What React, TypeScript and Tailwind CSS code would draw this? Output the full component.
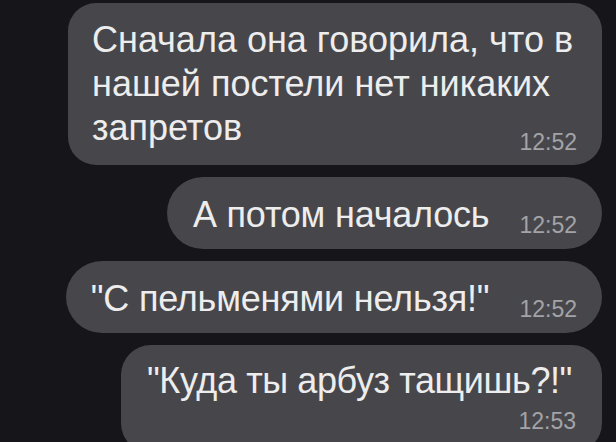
import React from "react";

type Msg = {
  lines: string[];
  track?: string[];
  time: string;
  kind: "block" | "pill" | "stack";
  box: string;
};

const messages: Msg[] = [
  {
    lines: ["Сначала она говорила, что в", "нашей постели нет никаких", "запретов"],
    time: "12:52",
    kind: "block",
    box: "w-[534px] rounded-[28px] pl-[24px] pr-[26px] pt-[15px] pb-[11px]",
  },
  {
    lines: ["А потом началось"],
    track: ["tracking-[-0.2px]"],
    time: "12:52",
    kind: "pill",
    box: "rounded-full pl-[26px] pr-[25px] pt-[16px] pb-[12px]",
  },
  {
    lines: ["\"С пельменями нельзя!\""],
    track: ["tracking-[-0.2px]"],
    time: "12:52",
    kind: "pill",
    box: "rounded-full pl-[25px] pr-[25px] pt-[16px] pb-[12px]",
  },
  {
    lines: ["\"Куда ты арбуз тащишь?!\""],
    track: ["tracking-[-0.4px]"],
    time: "12:53",
    kind: "stack",
    box: "rounded-[30px] pl-[26px] pr-[30px] pt-[14px] pb-[20px]",
  },
];

const Bubble = ({ lines, track, time, kind, box }: Msg) => {
  const text = (
    <div className="text-[36px] leading-[44px] text-[#ededee] whitespace-nowrap">
      {lines.map((l, i) => (
        <div key={i} className={track?.[i] ?? ""}>
          {l}
        </div>
      ))}
    </div>
  );
  const stamp = "text-[23px] leading-[23px] text-[#a3a3a8]";

  if (kind === "pill") {
    return (
      <div className={`bg-[#47474b] flex items-end ${box}`}>
        {text}
        <span className={`${stamp} ml-[30px]`}>{time}</span>
      </div>
    );
  }
  return (
    <div className={`bg-[#47474b] flex flex-col ${box}`}>
      {text}
      <span
        className={`${stamp} self-end ${
          kind === "block" ? "-mt-[19px] -mr-[1px]" : "mt-[7px] -mr-[4px]"
        }`}
      >
        {time}
      </span>
    </div>
  );
};

export default function App() {
  return (
    <div
      className="h-[442px] w-[616px] overflow-hidden bg-[#16151a] pt-[3px] pr-[14px] flex flex-col items-end gap-[12px]"
      style={{ fontFamily: '"Liberation Sans", Arial, sans-serif' }}
    >
      {messages.map((m, i) => (
        <Bubble key={i} {...m} />
      ))}
    </div>
  );
}
